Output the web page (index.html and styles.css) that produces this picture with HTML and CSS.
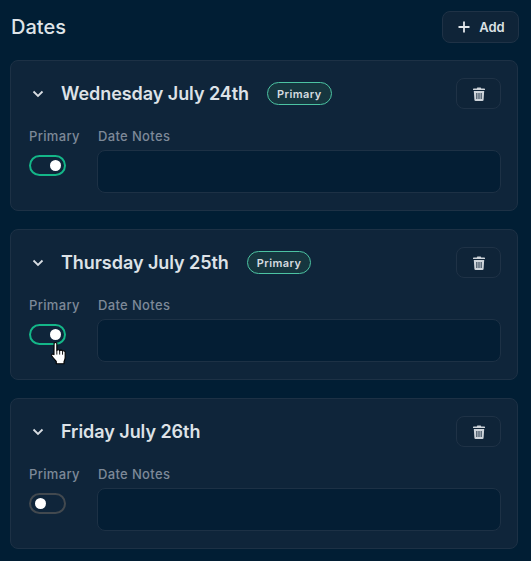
FILE: index.html
```html
<!DOCTYPE html>
<html lang="en">
<head>
<meta charset="utf-8">
<title>Dates</title>
<link rel="stylesheet" href="styles.css">
</head>
<body>
<main class="page">
  <header class="top">
    <h1 class="title">Dates</h1>
    <button class="btn add" type="button">
      <svg class="plus" viewBox="0 0 12 12" width="12" height="12"><path d="M6 .5v11M.5 6h11" fill="none" stroke="currentColor" stroke-width="1.8"/></svg>
      <span>Add</span>
    </button>
  </header>

  <section class="card">
    <div class="head">
      <svg class="chev" viewBox="0 0 12 8" width="12" height="8"><path d="M1.5 1.5 6 6l4.500-4.500" fill="none" stroke="currentColor" stroke-width="1.800"/></svg>
      <h2 class="date">Wednesday July 24th</h2>
      <span class="badge">Primary</span>
      <button class="btn trash" type="button" aria-label="Delete">
        <svg viewBox="0 0 12 14" width="12" height="14"><path fill="currentColor" fill-rule="evenodd" d="M4.300.5h3.400l.5 1H11.300a.7.700 0 0 1 .7.700v.8H0v-.8a.7.700 0 0 1 .7-.7h3.100zM.8 4h10.400l-.6 8.700a1.300 1.300 0 0 1-1.300 1.300H2.700a1.300 1.300 0 0 1-1.300-1.300zM3.400 6v6h.9V6zm2.150 0v6h.9V6zm2.150 0v6h.9V6z"/></svg>
      </button>
    </div>
    <div class="fields">
      <div class="field-primary">
        <span class="label">Primary</span>
        <span class="toggle on"><span class="knob"></span></span>
      </div>
      <div class="field-notes">
        <span class="label">Date Notes</span>
        <div class="notes"></div>
      </div>
    </div>
  </section>

  <section class="card">
    <div class="head">
      <svg class="chev" viewBox="0 0 12 8" width="12" height="8"><path d="M1.5 1.5 6 6l4.500-4.500" fill="none" stroke="currentColor" stroke-width="1.800"/></svg>
      <h2 class="date">Thursday July 25th</h2>
      <span class="badge">Primary</span>
      <button class="btn trash" type="button" aria-label="Delete">
        <svg viewBox="0 0 12 14" width="12" height="14"><path fill="currentColor" fill-rule="evenodd" d="M4.300.5h3.400l.5 1H11.300a.7.700 0 0 1 .7.700v.8H0v-.8a.7.700 0 0 1 .7-.7h3.100zM.8 4h10.400l-.6 8.700a1.300 1.300 0 0 1-1.300 1.300H2.700a1.300 1.300 0 0 1-1.300-1.300zM3.400 6v6h.9V6zm2.150 0v6h.9V6zm2.150 0v6h.9V6z"/></svg>
      </button>
    </div>
    <div class="fields">
      <div class="field-primary">
        <span class="label">Primary</span>
        <span class="toggle on"><span class="knob"></span>
          <svg class="cursor" viewBox="0 0 14 21" width="16" height="24"><path fill="#fff" stroke="#000" stroke-width="1" stroke-linejoin="round" d="M2.700 1.300c0-1.200 2.400-1.200 2.400 0V7.500c.5-1 2.300-1 2.500.2.500-.9 2.300-.8 2.500.4.500-.7 2.300-.5 2.300.9v4.500c0 1.700-.6 2.600-1 3.500v2H4.600v-2C3.300 15.500 1.500 13.500.7 12.200c-.7-1.300.8-2.200 1.900-1.200z"/><path stroke="#000" stroke-width=".8" d="M5.100 7.500v3.500M7.600 7.700v3.300M10.100 8.100v3"/></svg>
        </span>
      </div>
      <div class="field-notes">
        <span class="label">Date Notes</span>
        <div class="notes"></div>
      </div>
    </div>
  </section>

  <section class="card">
    <div class="head">
      <svg class="chev" viewBox="0 0 12 8" width="12" height="8"><path d="M1.5 1.5 6 6l4.500-4.500" fill="none" stroke="currentColor" stroke-width="1.800"/></svg>
      <h2 class="date">Friday July 26th</h2>
      <button class="btn trash" type="button" aria-label="Delete">
        <svg viewBox="0 0 12 14" width="12" height="14"><path fill="currentColor" fill-rule="evenodd" d="M4.300.5h3.400l.5 1H11.300a.7.700 0 0 1 .7.700v.8H0v-.8a.7.700 0 0 1 .7-.7h3.100zM.8 4h10.400l-.6 8.700a1.300 1.300 0 0 1-1.300 1.300H2.700a1.300 1.300 0 0 1-1.300-1.300zM3.400 6v6h.9V6zm2.150 0v6h.9V6zm2.150 0v6h.9V6z"/></svg>
      </button>
    </div>
    <div class="fields">
      <div class="field-primary">
        <span class="label">Primary</span>
        <span class="toggle"><span class="knob"></span></span>
      </div>
      <div class="field-notes">
        <span class="label">Date Notes</span>
        <div class="notes"></div>
      </div>
    </div>
  </section>
</main>
</body>
</html>
```
FILE: styles.css
```css
* { box-sizing: border-box; }
html, body { margin: 0; height: 100%; overflow: hidden; }
body {
  background: #011e34;
  font-family: Inter, "Liberation Sans", sans-serif;
  color: #e2e6ea;
}
.page {
  padding: 11px 13px 0 10px;
  width: 531px;
}
.top {
  display: flex;
  align-items: center;
  justify-content: space-between;
  height: 32px;
  margin-bottom: 17px;
  padding-left: 1px;
}
.title {
  margin: 0;
  font-size: 20px;
  line-height: 30px;
  font-weight: 500;
  color: #dfe4e8;
}
.btn {
  display: flex;
  align-items: center;
  justify-content: center;
  font-family: inherit;
  color: #dce1e5;
  background: #0f2438;
  border: 1px solid #1f3246;
  border-radius: 8px;
  padding: 0;
}
.add {
  width: 77px;
  height: 32px;
  gap: 9px;
  margin-right: -1px;
  padding-left: 2px;
  font-size: 13px;
  font-weight: 600;
}
.plus { color: #e2e6ea; }
.card {
  height: 151px;
  margin-bottom: 18px;
  padding: 17px 16px 0 18px;
  background: #0f253a;
  border: 1px solid #1d3145;
  border-radius: 8px;
}
.head {
  display: flex;
  align-items: center;
  height: 31px;
}
.chev { color: #d8dde2; margin: 0 0 0 3px; }
.date {
  margin: 0 0 0 17px;
  font-size: 18px;
  line-height: 28px;
  font-weight: 600;
  letter-spacing: -.05px;
  color: #dde2e7;
}
.badge {
  margin-left: 18px;
  height: 23px;
  padding: 0 9px;
  display: flex;
  align-items: center;
  font-size: 11px;
  font-weight: 600;
  letter-spacing: .4px;
  color: #d6dce0;
  background: #16363f;
  border: 1px solid #4cc3a2;
  border-radius: 12px;
}
.trash {
  margin-left: auto;
  width: 45px;
  height: 31px;
  color: #ced4da;
}
.fields {
  display: flex;
  gap: 17px;
  margin-top: 17px;
}
.field-primary {
  display: flex;
  flex-direction: column;
  flex: none;
  width: 51px;
}
.field-notes {
  display: flex;
  flex-direction: column;
  flex: 1;
}
.label {
  font-size: 13px;
  line-height: 20px;
  font-weight: 500;
  color: #7d8998;
  letter-spacing: .35px;
  white-space: nowrap;
}
.field-notes .label { padding-left: 1px; }
.notes {
  height: 43px;
  margin-top: 4px;
  background: #041e34;
  border: 1px solid #1d3145;
  border-radius: 8px;
}
.toggle {
  position: relative;
  display: flex;
  align-items: center;
  width: 37px;
  height: 21px;
  margin-top: 9px;
  padding: 0 4px;
  background: #0f253a;
  border: 2.500px solid #42494f;
  border-radius: 11px;
}
.toggle.on {
  border-color: #14b688;
  justify-content: flex-end;
  padding-right: 3px;
}
.knob {
  width: 11px;
  height: 11px;
  border-radius: 50%;
  background: #fff;
}
.cursor {
  position: absolute;
  left: 19.5px;
  top: 15.5px;
  overflow: visible;
}
```
